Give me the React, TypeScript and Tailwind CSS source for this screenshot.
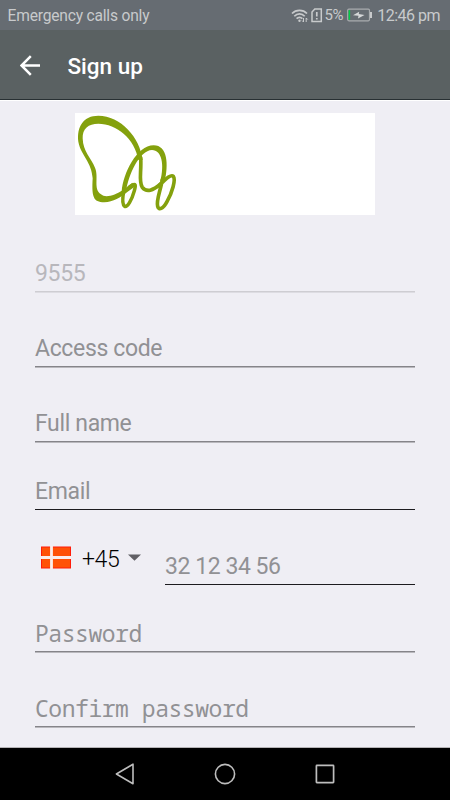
import { clsx } from "clsx";

type FieldProps = {
  label: string;
  className?: string;
  labelClassName?: string;
  line?: string;
};

function Field({
  label,
  className,
  labelClassName = "mb-1 tracking-[-0.35px]",
  line = "h-0.5 border-t border-[#858489] bg-[#b9b8bd]",
}: FieldProps) {
  return (
    <div className={clsx("flex flex-col justify-end", className)}>
      <span className={clsx("block text-[23px] leading-[26px] whitespace-pre", labelClassName)}>{label}</span>
      <div className={line} />
    </div>
  );
}

function StatusBar() {
  return (
    <div className="flex h-[30px] items-center justify-between bg-[#666c72] pr-[10px] pl-[7.5px] text-[#c8cacc]">
      <span className="pt-0.5 text-[15.6px] leading-5 tracking-[-0.2px]">Emergency calls only</span>
      <div className="flex items-center">
        <svg width="18" height="16" viewBox="0 0 18 16" className="mt-0.5 mr-[2px]" fill="none" stroke="currentColor" strokeWidth="1.7">
          <path d="M1 5.5C5 1.2 12 1.2 16 5.5M3.3 8.3c3-3.3 7.5-3.3 10.4 0M5.6 10.7c1.8-1.8 4-1.8 5.8 0" />
          <circle cx="8.5" cy="12.8" r="1.2" fill="currentColor" stroke="none" />
          <path d="M12.5 10v4M11 12.5l1.5 1.5M15.2 14v-4M15.2 10l1.5 1.5" strokeWidth="1" />
        </svg>
        <svg width="12" height="15" viewBox="0 0 12 15" className="mr-[2px]" fill="none" stroke="currentColor" strokeWidth="1.5">
          <path d="M3.8 1h6.5v12.5H1V4z" />
          <path d="M5.8 4v4.5M5.8 10v1.6" strokeWidth="1.7" />
        </svg>
        <span className="mr-[4px] text-[15px] leading-5 tracking-[-0.4px]">5%</span>
        <svg width="26" height="14" viewBox="0 0 26 14" className="mr-[4px]">
          <rect x="0.7" y="1.2" width="21.8" height="11.6" rx="1.2" fill="none" stroke="#a9acaf" strokeWidth="1.2" />
          <path d="M24 4v6" stroke="#c8cacc" strokeWidth="2" />
          <rect x="1.6" y="2.2" width="1.5" height="9.6" fill="#00cf45" />
          <path d="M6 7.300l6.200-3.600-.4 2.400 5.700.800-6.500 3.500.5-2.700z" fill="#d6d8d9" />
        </svg>
        <span className="pt-0.5 text-[16px] leading-5 tracking-[-0.5px]">12:46 pm</span>
      </div>
    </div>
  );
}

function Header() {
  return (
    <header className="flex h-[70px] items-center border-b border-[#283033] bg-[#5a6162] pl-[20px] text-white">
      <svg width="21" height="21" viewBox="0 0 21 21" className="mt-px" fill="none" stroke="currentColor" strokeWidth="2.5">
        <path d="M20 10.5H1.8M10.8 1.2L1.5 10.5l9.3 9.3" />
      </svg>
      <h1 className="ml-[26.5px] pt-[3px] text-[22.5px] leading-7 font-medium">Sign up</h1>
    </header>
  );
}

function Logo() {
  return (
    <div className="mx-auto h-[102px] w-[300px] bg-white">
      <svg width="300" height="102" viewBox="30 24 900 306" fill="#84a10d">
        <path d="M233 165C225 97 167 32 100 32C55 32 35 65 40 110C48 152 80 170 83 220C80 275 84 292 118 292C145 291 166 278 190 259L208 246L202 233L174 255C150 271 121 280 108 268C84 252 102 216 90 188C78 158 54 140 53 100C52 71 70 56 100 56C155 56 210 102 220 165Z" />
        <path d="M170 260C174 205 215 122 266 121C308 121 311 179 299 230L286 228C299 178 290 135 261 135C224 136 190 208 183 260Z" />
        <g fill="none" stroke="#84a10d" strokeLinecap="round">
          <path d="M194 246C214 231 213 240 208 257C200 286 187 308 179 304C169 297 174 270 177 255" strokeWidth="10.5" />
          <path d="M227 158C230 200 220 230 232 247C245 264 264 256 287 237" strokeWidth="11" />
          <path d="M285 239C306 218 319 208 325 214C333 224 321 264 306 290C294 313 281 316 278 304C273 286 286 259 292 224" strokeWidth="11" />
        </g>
      </svg>
    </div>
  );
}

function PhoneRow() {
  return (
    <div className="flex h-[75px]">
      <div className="flex w-[130px] items-start pt-[36px] pl-[6px]">
        <svg width="30" height="23" viewBox="0 0 30 23" className="shrink-0">
          <rect y="0.5" width="30" height="22" fill="#ff1c0a" />
          <path d="M1 1.5h28v20H1z" fill="#ff5207" />
          <path d="M10.5 0v23M0 11.5h30" stroke="#fbeeed" strokeWidth="2.8" />
        </svg>
        <span className="ml-[11px] pt-px text-[23px] leading-[26px] font-light tracking-[-0.4px] text-black">+45</span>
        <svg width="13" height="7" viewBox="0 0 13 7" className="mt-[8px] ml-[9px] shrink-0" fill="#616065">
          <path d="M0 .5h13L6.5 6.8z" />
        </svg>
      </div>
      <Field label="32 12 34 56" className="flex-1" labelClassName="mb-1 tracking-[-0.45px]" line="h-px bg-[#1c1b1f]" />
    </div>
  );
}

function NavBar() {
  return (
    <nav className="flex h-[53px] items-center justify-between border-t border-[#b5b3b6] bg-black px-[115px] text-[#bdbdbd]">
      <svg width="20" height="22" viewBox="0 0 20 22" fill="none" stroke="currentColor" strokeWidth="1.6" strokeLinejoin="round">
        <path d="M18 1.2v19.5L1.4 11z" />
      </svg>
      <svg width="22" height="22" viewBox="0 0 22 22" fill="none" stroke="currentColor" strokeWidth="1.6">
        <circle cx="11" cy="11" r="9.6" />
      </svg>
      <svg width="20" height="20" viewBox="0 0 20 20" fill="none" stroke="currentColor" strokeWidth="1.7">
        <rect x="1.4" y="1.4" width="17.2" height="17.2" rx="0.5" />
      </svg>
    </nav>
  );
}

export default function App() {
  return (
    <div className="flex h-[800px] w-[450px] flex-col overflow-hidden bg-[#efeef4] font-['Roboto',sans-serif]">
      <StatusBar />
      <Header />
      <main className="flex-1 border-t border-white pt-[12px]">
        <Logo />
        <form className="px-[35px] text-[#919194]">
          <Field label="9555" className="h-[78px] text-[#b8b7bc]" line="h-0.5 border-t border-[#cecdd2] bg-[#dddce2]" />
          <Field label="Access code" className="h-[75px]" />
          <Field label="Full name" className="h-[75px]" />
          <Field label="Email" className="h-[67px]" line="h-px bg-[#1c1b1f]" />
          <PhoneRow />
          <Field
            label="Password"
            className="h-[68px] font-['Noto_Sans_Mono','DejaVu_Sans_Mono',monospace]"
            labelClassName="mb-[5px] tracking-[-0.45px]"
          />
          <Field
            label="Confirm password"
            className="h-[75px] font-['Noto_Sans_Mono','DejaVu_Sans_Mono',monospace]"
            labelClassName="mb-[5px] tracking-[-0.45px]"
          />
        </form>
      </main>
      <NavBar />
    </div>
  );
}
